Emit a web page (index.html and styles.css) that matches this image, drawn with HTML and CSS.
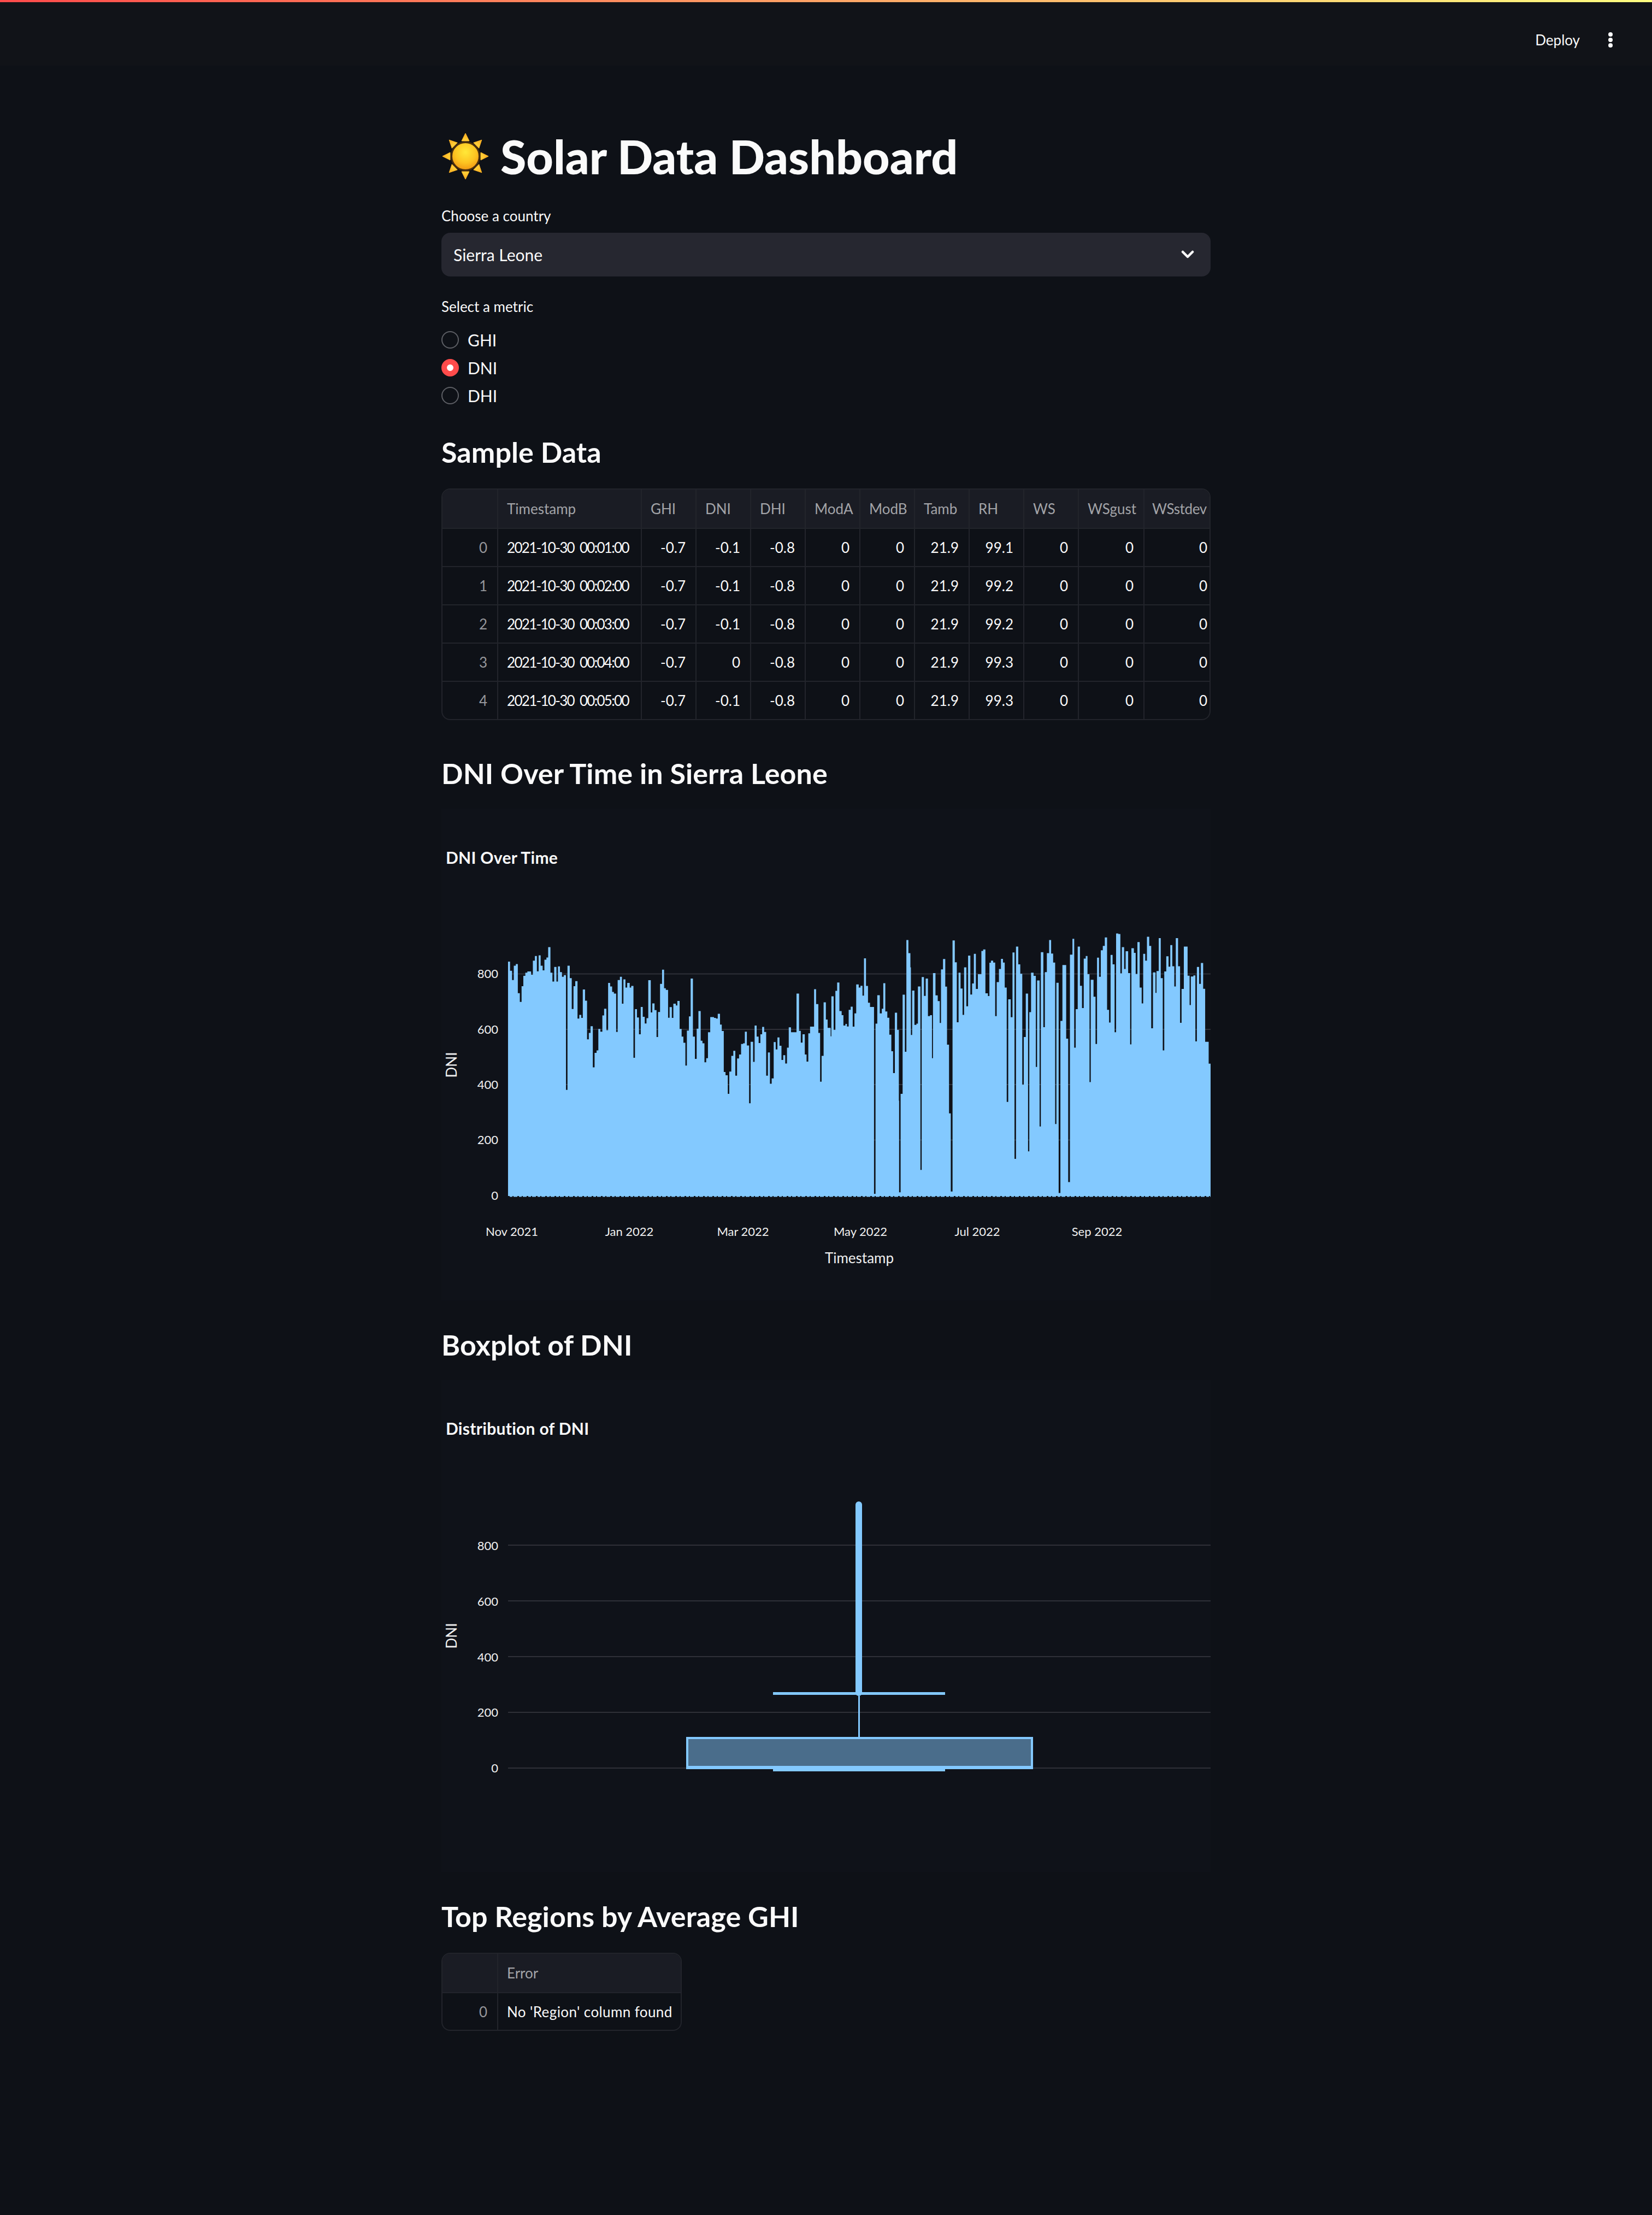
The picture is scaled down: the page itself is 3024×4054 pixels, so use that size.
FILE: index.html
```html
<!DOCTYPE html>
<html lang="en">
<head>
<meta charset="utf-8">
<title>Solar Data Dashboard</title>
<link rel="stylesheet" href="styles.css">
</head>
<body>
<header class="topbar">
  <span class="deploy">Deploy</span>
  <svg class="kebab" width="8" height="28" viewBox="0 0 8 28"><circle cx="4" cy="4" r="4"/><circle cx="4" cy="14" r="4"/><circle cx="4" cy="24" r="4"/></svg>
</header>
<main class="page">
  <h1 class="title">
    <svg class="sun" width="84" height="84" viewBox="-42 -42 84 84">
      <defs>
        <radialGradient id="disc" cx="50%" cy="35%" r="70%"><stop offset="0" stop-color="#ffe838"/><stop offset=".55" stop-color="#fdc421"/><stop offset="1" stop-color="#ee8f10"/></radialGradient>
        <linearGradient id="ray" x1="0" y1="0" x2="0" y2="1"><stop offset="0" stop-color="#ffa91f"/><stop offset="1" stop-color="#ffd43a"/></linearGradient>
      </defs>
      <g class="rays">
        <polygon points="0,-42 7,-28 -7,-28"/>
        <polygon points="0,-42 7,-28 -7,-28" transform="rotate(45)"/>
        <polygon points="0,-42 7,-28 -7,-28" transform="rotate(90)"/>
        <polygon points="0,-42 7,-28 -7,-28" transform="rotate(135)"/>
        <polygon points="0,-42 7,-28 -7,-28" transform="rotate(180)"/>
        <polygon points="0,-42 7,-28 -7,-28" transform="rotate(225)"/>
        <polygon points="0,-42 7,-28 -7,-28" transform="rotate(270)"/>
        <polygon points="0,-42 7,-28 -7,-28" transform="rotate(315)"/>
      </g>
      <circle class="disc" r="25.5"/>
    </svg>
    <span>Solar Data Dashboard</span>
  </h1>

  <div class="label label-country">Choose a country</div>
  <div class="select">
    <span>Sierra Leone</span>
    <svg class="chevron" width="24" height="16" viewBox="0 0 24 16"><path d="M3 3l9 9 9-9"/></svg>
  </div>

  <div class="label label-metric">Select a metric</div>
  <div class="radios">
    <div class="radio"><i class="dot"></i><span>GHI</span></div>
    <div class="radio"><i class="dot dot-on"></i><span>DNI</span></div>
    <div class="radio"><i class="dot"></i><span>DHI</span></div>
  </div>

  <h2 class="h3 h3-sample">Sample Data</h2>
  <div class="frame frame-wide">
    <table class="grid">
      <colgroup><col class="c-idx"><col class="c-ts"><col class="c-n"><col class="c-n"><col class="c-n"><col class="c-n"><col class="c-n"><col class="c-n"><col class="c-n"><col class="c-n"><col class="c-w"><col class="c-last"></colgroup>
      <thead><tr><th></th><th>Timestamp</th><th>GHI</th><th>DNI</th><th>DHI</th><th>ModA</th><th>ModB</th><th>Tamb</th><th>RH</th><th>WS</th><th>WSgust</th><th class="th-tight">WSstdev</th></tr></thead>
      <tbody>
        <tr><td class="idx">0</td><td class="ts">2021-10-30 00:01:00</td><td>-0.7</td><td>-0.1</td><td>-0.8</td><td>0</td><td>0</td><td>21.9</td><td>99.1</td><td>0</td><td>0</td><td>0</td></tr>
        <tr><td class="idx">1</td><td class="ts">2021-10-30 00:02:00</td><td>-0.7</td><td>-0.1</td><td>-0.8</td><td>0</td><td>0</td><td>21.9</td><td>99.2</td><td>0</td><td>0</td><td>0</td></tr>
        <tr><td class="idx">2</td><td class="ts">2021-10-30 00:03:00</td><td>-0.7</td><td>-0.1</td><td>-0.8</td><td>0</td><td>0</td><td>21.9</td><td>99.2</td><td>0</td><td>0</td><td>0</td></tr>
        <tr><td class="idx">3</td><td class="ts">2021-10-30 00:04:00</td><td>-0.7</td><td>0</td><td>-0.8</td><td>0</td><td>0</td><td>21.9</td><td>99.3</td><td>0</td><td>0</td><td>0</td></tr>
        <tr><td class="idx">4</td><td class="ts">2021-10-30 00:05:00</td><td>-0.7</td><td>-0.1</td><td>-0.8</td><td>0</td><td>0</td><td>21.9</td><td>99.3</td><td>0</td><td>0</td><td>0</td></tr>
      </tbody>
    </table>
  </div>

  <h2 class="h3 h3-chart">DNI Over Time in Sierra Leone</h2>
  <svg class="chart" width="1408" height="900" viewBox="808 1480 1408 900">
    <text class="chart-title" x="816" y="1581">DNI Over Time</text>
    <g class="gridlines">
      <path d="M930 1782.5H2216M930 1884H2216M930 1985H2216M930 2086.5H2216M930 2188.5H2216"/>
    </g>
    <g class="area">
      <path transform="translate(800 1680) scale(.4592 .4209)" d="M283 1213V190H291V230H299V270H306V208H314V201H322V327H330V365H337V297H344V252H352V238H360V233H375V247H382V186H390V166H398V232H405V163H413V208H421V228H428V182H436V172H443V127H452V238H460V277H467V213H476V277H482V211H490V236H498V256H505V249H514V748H520V208H529V262H537V396H544V297H551V275H560V438H567V422H575V435H581V311H590V360H598V528H605V500H612V471H621V650H628V587H636V576H643V483H651V495H659V424H666V395H675V488H682V283H690V298H698V322H705V329H714V496H720V270H729V256H737V373H743V267H751V303H758V283H768V303H774V296H783V608H789V397H797V433H805V506H812V387H820V430H828V459H835V436H842V271H852V411H858V372H867V401H875V518H881V409H889V287H897V225H905V306H912V313H921V434H927V388H936V435H942V373H952V381H958V361H967V483H975V516H982V543H990V642H996V490H1004V428H1011V264H1020V516H1028V613H1035V482H1042V405H1051V534H1058V545H1066V628H1073V610H1080V497H1089V431H1104V435H1112V438H1119V417H1128V464H1135V492H1143V670H1150V684H1159V765H1165V668H1173V600H1181V578H1189V686H1196V611H1204V594H1212V548H1220V545H1227V495H1235V555H1244V806H1250V539H1260V626H1266V468H1274V516H1282V544H1289V506H1296V474H1304V496H1312V686H1319V585H1327V721H1334V698H1342V540H1350V572H1357V520H1365V556H1373V618H1380V597H1388V633H1395V564H1402V476H1411V497H1433V329H1443V491H1450V542H1457V506H1466V594H1473V625H1480V502H1487V473H1503V310H1511V375H1520V500H1527V712H1533V600H1541V367H1550V442H1557V478H1569V1213Z"/>
      <path transform="translate(1520 1680) scale(.4592 .4209)" d="M0 1213V515H4V341H13V487H20V317H27V281H36V405H45V423H52V468H60V461H66V472H73V400H81V386H89V473H96V415H103V289H113V303H120V295H128V338H134V176H142V296H150V369H158V387H174V1200H180V460H187V336H197V415H205V395H211V284H219V407H227V434H235V508H243V580H250V675H257V412H266V487H273V795H274V1193H280V765H288V334H297V582H303V96H311V153H319V215H321V509H326V316H335V465H343V460H349V298H359V1096H364V257H373V339H380V264H389V427H397V423H405V610H409V240H419V337H428V362H436V457H441V224H449V179H458V299H465V551H473V850H480V1190H487V98H496V193H504V454H511V238H519V307H527V422H533V215H542V384H549V164H558V333H565V285H572V156H580V309H588V245H602V144H609V137H618V328H628V340H634V195H640V186H649V194H657V427H663V279H672V222H680V178H688V194H695V303H703V800H709V354H719V432H726V150H734V1048H740V125H749V202H757V243H765V725H771V518H779V329H788V1015H793V410H800V238H810V252H819V648H824V272H834V907H839V149H849V475H855V236H863V153H872V96H880V155H888V194H896V896H901V282H910V1196H917V448H925V205H940V525H948V1149H955V160H965V91H972V564H978V397H986V125H995V295H1003V392H1010V177H1018V166H1025V245H1033V714H1038V269H1049V343H1057V548H1063V173H1071V256H1078V141H1086V122H1094V85H1103V400H1111V455H1117V161H1125V202H1133V497H1139V68H1148V70H1156V241H1162V127H1171V222H1177V145H1187V240H1195V550H1200V132H1210V152H1217V244H1224V105H1233V303H1241V372H1247V156H1255V186H1262V82H1271V122H1279V480H1286V237H1296V326H1300V231H1309V88H1317V262H1325V576H1331V233H1339V167H1348V212H1355V118H1363V210H1371V298H1377V88H1386V210H1394V456H1400V309H1409V125H1424V251H1432V379H1437V255H1447V250H1455V537H1461V213H1470V287H1477V196H1486V308H1494V539H1508V634H1516V1213Z"/>
    </g>
    <path class="base-noise" d="M930 2190H2216"/>
    <g class="tick tick-y">
      <text x="912" y="1790">800</text>
      <text x="912" y="1892">600</text>
      <text x="912" y="1993">400</text>
      <text x="912" y="2094">200</text>
      <text x="912" y="2196">0</text>
    </g>
    <g class="tick tick-x">
      <text x="937" y="2262">Nov 2021</text>
      <text x="1152" y="2262">Jan 2022</text>
      <text x="1360" y="2262">Mar 2022</text>
      <text x="1575" y="2262">May 2022</text>
      <text x="1789" y="2262">Jul 2022</text>
      <text x="2008" y="2262">Sep 2022</text>
    </g>
    <text class="axis-title" x="1573" y="2312">Timestamp</text>
    <text class="axis-title" transform="translate(836 1949) rotate(-90)">DNI</text>
  </svg>

  <h2 class="h3 h3-chart-next">Boxplot of DNI</h2>
  <svg class="chart" width="1408" height="900" viewBox="808 2526 1408 900">
    <text class="chart-title" x="816" y="2626">Distribution of DNI</text>
    <g class="gridlines">
      <path d="M930 2828H2216M930 2930H2216M930 3032H2216M930 3134H2216M930 3236H2216"/>
    </g>
    <g class="box">
      <rect class="outliers" x="1566" y="2748" width="12" height="356" rx="6"/>
      <path class="whisker" d="M1572.5 3104V3180"/>
      <rect class="cap" x="1415" y="3097" width="315" height="5"/>
      <rect class="cap" x="1415" y="3236" width="315" height="6"/>
      <rect class="box-body" x="1258" y="3181" width="631" height="55"/>
      <rect class="cap" x="1256" y="3232" width="634" height="6"/>
    </g>
    <g class="tick tick-y">
      <text x="912" y="2837">800</text>
      <text x="912" y="2939">600</text>
      <text x="912" y="3041">400</text>
      <text x="912" y="3142">200</text>
      <text x="912" y="3244">0</text>
    </g>
    <text class="axis-title" transform="translate(836 2994) rotate(-90)">DNI</text>
  </svg>

  <h2 class="h3 h3-chart-next">Top Regions by Average GHI</h2>
  <div class="frame frame-small">
    <table class="grid">
      <colgroup><col class="c-idx"><col></colgroup>
      <thead><tr><th></th><th>Error</th></tr></thead>
      <tbody><tr><td class="idx">0</td><td class="msg">No 'Region' column found</td></tr></tbody>
    </table>
  </div>
</main>
</body>
</html>
```
FILE: styles.css
```css
* { box-sizing: border-box; }
html, body { margin: 0; padding: 0; }
body {
  background: #0e1117;
  color: #fafafa;
  font-family: "Lato", "Noto Sans", sans-serif;
  height: 4054px;
  overflow: hidden;
}
.topbar {
  height: 120px;
  background: #111318;
  border-top: 4px solid transparent;
  border-image: linear-gradient(90deg, #ff4b4b, #fffd80) 1;
  border-left: 0; border-right: 0; border-bottom: 0;
  display: flex;
  align-items: center;
  justify-content: flex-end;
  padding: 22px 72px 0 0;
}
.deploy { font-size: 26px; margin-right: 52px; }
.kebab { fill: #fafafa; }
.page { width: 1408px; margin: 0 auto; }
.title {
  margin: 110px 0 0;
  height: 112px;
  display: flex;
  align-items: center;
  gap: 22px;
  font-size: 86px;
  font-weight: 900;
  line-height: 112px;
}
.sun { margin-left: 2px; }
.rays polygon { fill: url(#ray); stroke: #ffb524; stroke-width: 1; stroke-linejoin: round; }
.disc { fill: url(#disc); stroke: #4a2f0e; stroke-width: 3; }
.label { font-size: 26px; height: 36px; line-height: 34px; }
.label-country { margin-top: 36px; }
.label-metric { margin-top: 38px; }
.select {
  margin-top: 12px;
  height: 80px;
  background: #262730;
  border-radius: 16px;
  padding: 0 30px 0 22px;
  display: flex;
  align-items: center;
  justify-content: space-between;
  font-size: 30px;
}
.chevron { fill: none; stroke: #fafafa; stroke-width: 4.5; stroke-linecap: round; stroke-linejoin: round; }
.radios { margin-top: 16px; }
.radio { height: 51px; display: flex; align-items: center; gap: 16px; font-size: 30px; }
.dot { width: 32px; height: 32px; border-radius: 50%; border: 2px solid #5d5f65; background: #0e1117; }
.dot-on { border: 10px solid #ff4b4b; background: #fff; }
.h3 { margin: 0; height: 70px; font-size: 52px; line-height: 70px; font-weight: 700; letter-spacing: .1px; }
.h3-sample { margin-top: 43px; }
.h3-chart { margin-top: 62px; }
.h3-chart-next { margin-top: 46px; }
.frame { margin-top: 32px; border: 2px solid #22242b; border-radius: 16px; overflow: hidden; }
.frame-wide { width: 1408px; height: 424px; }
.frame-small { width: 440px; height: 143px; }
.grid { width: 100%; table-layout: fixed; border-collapse: separate; border-spacing: 0; font-size: 26px; }
.c-idx { width: 102px; }
.c-ts { width: 263px; }
.c-n { width: 100px; }
.c-w { width: 120px; }
.c-last { width: 119px; }
.grid th, .grid td {
  padding: 0 18px 0 16px;
  white-space: nowrap;
  overflow: hidden;
  border-right: 2px solid #22242b;
  border-bottom: 2px solid #22242b;
}
.grid th:last-child, .grid td:last-child { border-right: 0; }
.grid tbody tr:last-child td { border-bottom: 0; height: 68px; }
.grid th {
  height: 72px;
  background: #1a1c24;
  color: #a3a4a8;
  font-weight: 400;
  text-align: left;
}
.grid .th-tight { padding-right: 0; padding-left: 14px; letter-spacing: -.4px; }
.grid td { height: 70px; text-align: right; }
.grid td:last-child { padding-right: 4px; }
.grid .idx { color: #96979b; }
.grid .ts { text-align: left; letter-spacing: -1.7px; word-spacing: 5px; padding-right: 0; }
.grid .msg { text-align: left; letter-spacing: .4px; }
.chart { display: block; margin-top: 30px; background: #0f1219; }
.chart-title { fill: #fafafa; font-size: 30px; font-weight: 700; letter-spacing: .3px; }
.gridlines path { stroke: #2f3038; stroke-width: 2; fill: none; }
.area path { fill: #83c9ff; }
.base-noise { stroke: #0f1219; stroke-width: 2; stroke-dasharray: 3 5 2 7; fill: none; }
.tick text { fill: #f0f0f0; font-size: 22px; }
.tick-y text { text-anchor: end; }
.tick-x text { text-anchor: middle; }
.axis-title { fill: #f0f0f0; font-size: 26px; text-anchor: middle; }
.outliers, .cap { fill: #83c9ff; }
.whisker { stroke: #83c9ff; stroke-width: 3; }
.box-body { fill: #4a6d8b; stroke: #83c9ff; stroke-width: 4; }
```
